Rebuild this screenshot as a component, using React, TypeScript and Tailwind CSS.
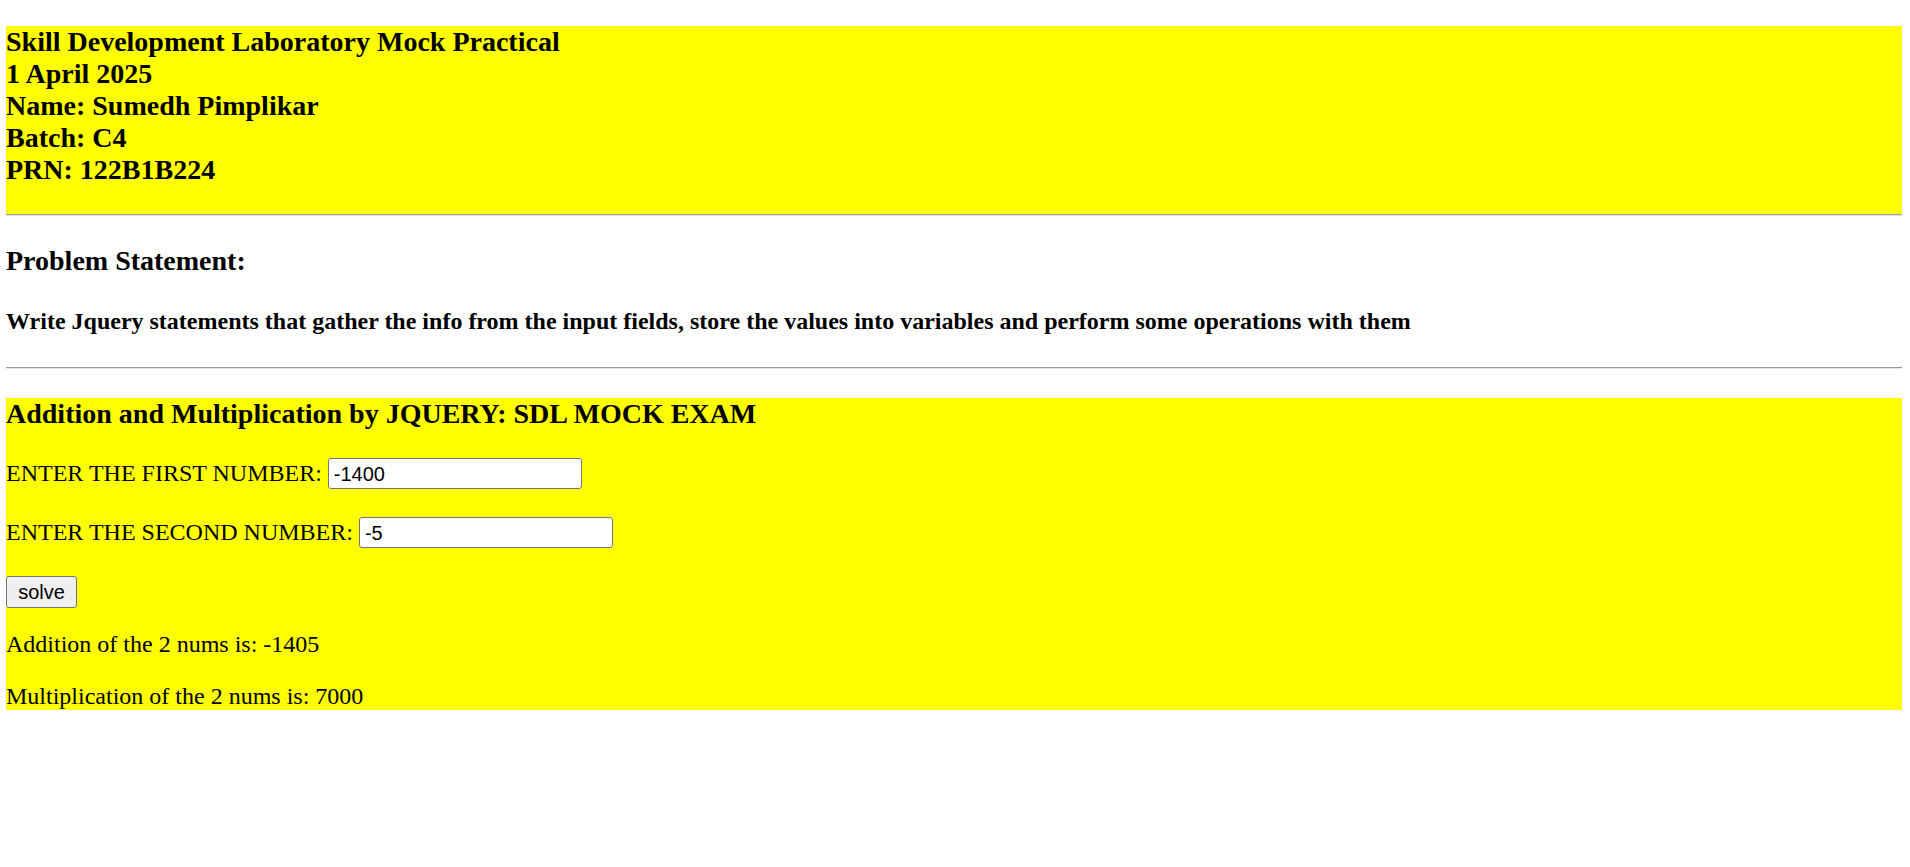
import React, { useState } from 'react';

const serif = { fontFamily: '"Liberation Serif", "Times New Roman", serif' };
const sans = { fontFamily: '"Liberation Sans", Arial, sans-serif' };

const App: React.FC = () => {
  const [first, setFirst] = useState('-1400');
  const [second, setSecond] = useState('-5');
  const [sum, setSum] = useState<number>(-1405);
  const [product, setProduct] = useState<number>(7000);

  const solve = () => {
    const a = parseFloat(first);
    const b = parseFloat(second);
    setSum(a + b);
    setProduct(a * b);
  };

  return (
    <div className="min-h-screen bg-white pl-[6px] pr-[8px] pt-[26px] text-black" style={serif}>
      {/* Header block */}
      <div className="bg-[#ffff00] pb-[28px]">
        <h3 className="text-[28px] font-bold leading-[32px]">
          Skill Development Laboratory Mock Practical
          <br />1 April 2025
          <br />Name: Sumedh Pimplikar
          <br />Batch: C4
          <br />PRN: 122B1B224
        </h3>
      </div>

      <hr className="h-[2px] border-0 border-t border-b border-t-[#9a9a9a] border-b-[#e6e6e6]" />

      {/* Problem statement */}
      <h3 className="mt-[29px] text-[28px] font-bold leading-[32px]">Problem Statement:</h3>
      <h4 className="mt-[30px] text-[24px] font-bold leading-[28px]">
        Write Jquery statements that gather the info from the input fields, store the values into variables and perform
        some operations with them
      </h4>

      <hr className="mt-[32px] h-[2px] border-0 border-t border-b border-t-[#9a9a9a] border-b-[#e6e6e6]" />

      {/* Exam block */}
      <div className="mt-[29px] bg-[#ffff00]">
        <h3 className="text-[28px] font-bold leading-[32px]">Addition and Multiplication by JQUERY: SDL MOCK EXAM</h3>

        <div className="mt-[28px] flex h-[32px] items-start gap-[6px] text-[24px]">
          <span className="mt-[1px] leading-[28px]">ENTER THE FIRST NUMBER:</span>
          <input
            type="text"
            value={first}
            onChange={(e) => setFirst(e.target.value)}
            className="h-[31px] w-[254px] rounded-[3px] border border-[#767676] bg-white pl-[5px] pt-[1px] text-[20px] leading-[23px] text-black outline-none"
            style={sans}
          />
        </div>

        <div className="mt-[27px] flex h-[32px] items-start gap-[6px] text-[24px]">
          <span className="mt-[1px] leading-[28px]">ENTER THE SECOND NUMBER:</span>
          <input
            type="text"
            value={second}
            onChange={(e) => setSecond(e.target.value)}
            className="h-[31px] w-[254px] rounded-[3px] border border-[#767676] bg-white pl-[5px] pt-[1px] text-[20px] leading-[23px] text-black outline-none"
            style={sans}
          />
        </div>

        <div className="mt-[27px]">
          <button
            onClick={solve}
            className="h-[32px] w-[71px] rounded-[3px] border border-[#767676] bg-[#efefef] text-[20px] leading-[23px] text-black"
            style={sans}
          >
            solve
          </button>
        </div>

        <p className="mt-[22px] text-[24px] leading-[28px]">Addition of the 2 nums is: {sum}</p>
        <p className="mt-[24px] text-[24px] leading-[28px]">Multiplication of the 2 nums is: {product}</p>
      </div>
    </div>
  );
};

export default App;
